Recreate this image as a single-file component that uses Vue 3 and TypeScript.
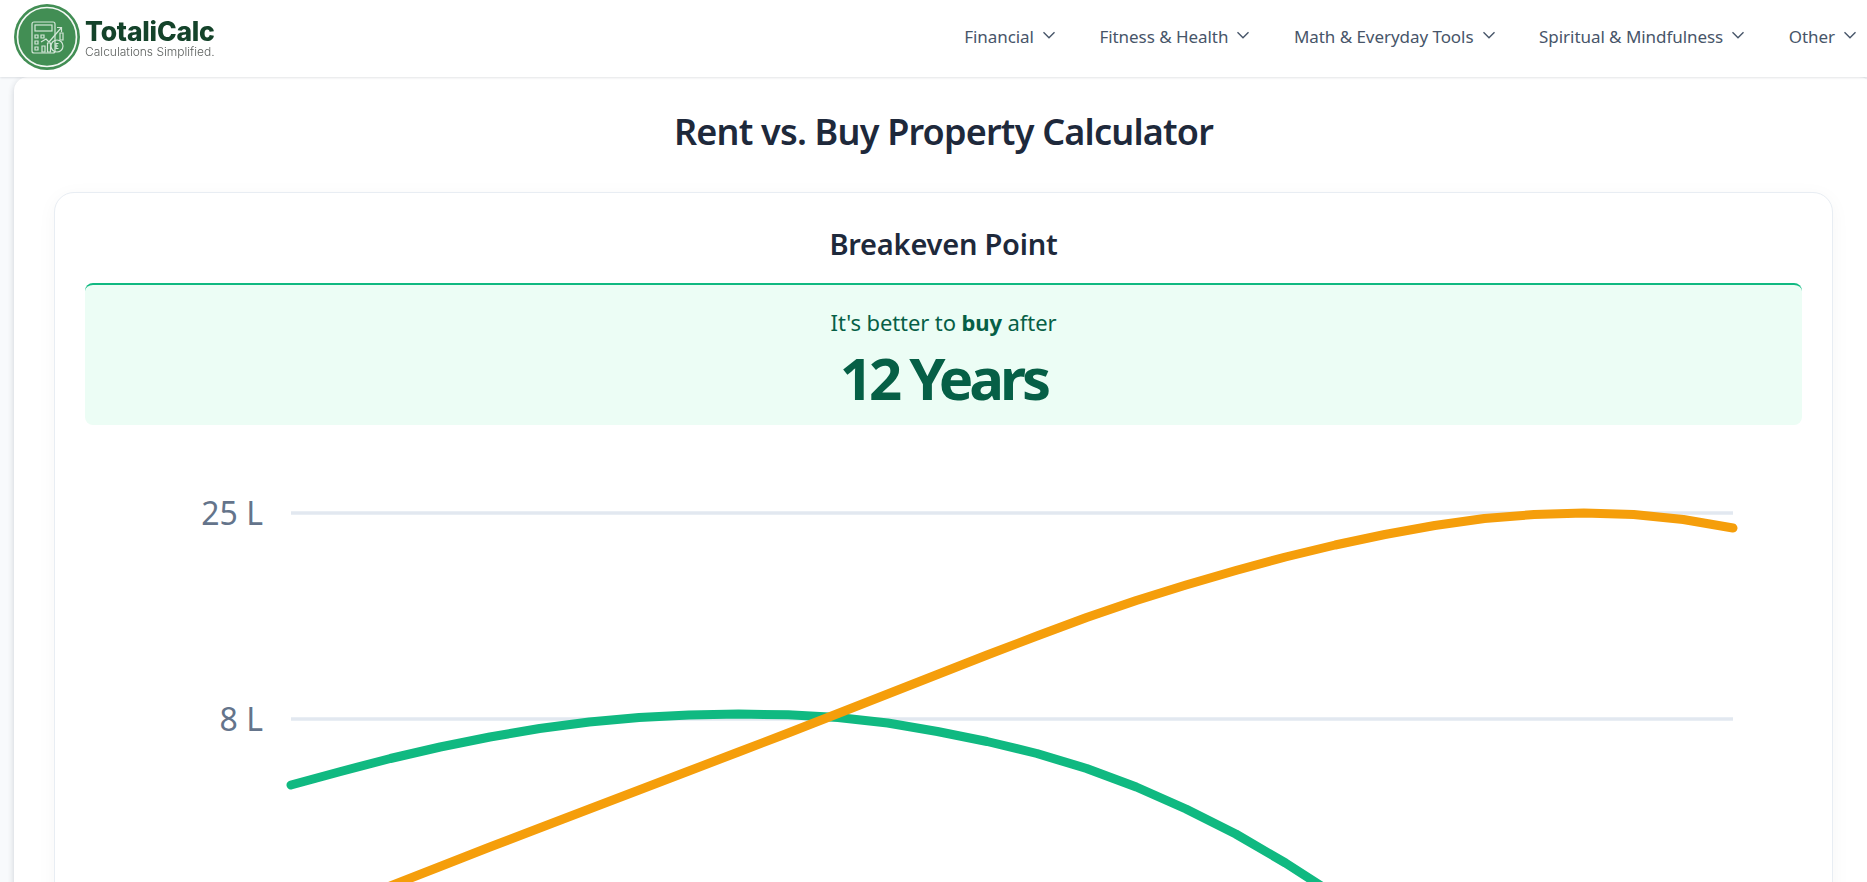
<script setup lang="ts">
const navItems: string[] = ['Financial', 'Fitness & Health', 'Math & Everyday Tools', 'Spiritual & Mindfulness', 'Other']

const xAt = (i: number): number => 291 + i * (1442 / 29)
const toPoints = (ys: number[]): string => ys.map((y, i) => `${xAt(i).toFixed(1)},${y}`).join(' ')

const green = toPoints([785, 771.5, 758.5, 747, 737, 728.5, 722, 717.5, 715, 714, 714.8, 717.5, 723, 731.5, 741.5, 753.5, 768.5, 787, 809, 834, 863, 895, 930, 968, 1010])
const orange = toPoints([925, 905.5, 886, 866.5, 847, 828, 809, 790, 771, 752, 733, 713.5, 694, 674.5, 655, 636, 617.5, 600.5, 585, 570.5, 557, 545, 534.5, 525.5, 518.5, 514.5, 513, 514.5, 519.5, 528])
const ticks = [
  { y: 513, label: '25 L' },
  { y: 719, label: '8 L' },
]
</script>

<template>
  <div class="page">
    <header class="topbar">
      <div class="brand">
        <svg class="logo" viewBox="0 0 66 66" aria-hidden="true">
          <circle cx="33" cy="33" r="33" fill="#428e54" />
          <circle cx="33" cy="33" r="29.5" fill="none" stroke="#f2f8f3" stroke-width="1.7" />
          <g fill="none" stroke="#d3e6d8" stroke-width="1.2">
            <rect x="18" y="18" width="23" height="31" rx="2" />
            <rect x="21" y="21" width="17" height="6" />
            <path d="M21 31h3v3h-3zM27 31h3v3h-3zM21 37h3v3h-3zM21 43h3v3h-3z" />
            <path d="M27 38l5-3 3 3 12-14M43 23.500h4.500v4.500" />
            <path d="M28 48v-6h3v6zM33.500 48v-9h3v9zM46 36v-7h3v7z" />
            <circle cx="43" cy="42" r="6" />
            <path d="M44.500 39.500h-2.500v5h2.500M41 42h3" />
          </g>
        </svg>
        <div class="brand-text">
          <span class="brand-name">TotaliCalc</span>
          <span class="brand-tag">Calculations Simplified.</span>
        </div>
      </div>
      <nav class="nav">
        <a v-for="item in navItems" :key="item" class="nav-item">
          <span>{{ item }}</span>
          <svg class="chev" viewBox="0 0 24 24" aria-hidden="true"><path d="m6 9 6 6 6-6" /></svg>
        </a>
      </nav>
    </header>

    <main class="sheet">
      <h1 class="title">Rent vs. Buy Property Calculator</h1>
      <section class="card">
        <h2 class="card-title">Breakeven Point</h2>
        <div class="result">
          <p class="result-lead">It's better to <strong>buy</strong> after</p>
          <p class="result-value">12 Years</p>
        </div>
        <svg class="chart" viewBox="85 449 1717 600" role="img" aria-label="Rent versus buy cost chart">
          <g v-for="t in ticks" :key="t.label">
            <line x1="291" x2="1733" :y1="t.y" :y2="t.y" class="grid" />
            <text x="263" :y="t.y + 12" text-anchor="end" class="tick">{{ t.label }}</text>
          </g>
          <polyline :points="green" class="series series-green" />
          <polyline :points="orange" class="series series-orange" />
        </svg>
      </section>
    </main>
  </div>
</template>

<style>
html, body { margin: 0; height: 882px; overflow: hidden; background: #f8fafc; }
</style>

<style scoped>
.page {
  height: 882px;
  overflow: hidden;
  font-family: "Noto Sans", "Open Sans", sans-serif;
  color: #1e293b;
}
.topbar {
  position: relative;
  z-index: 2;
  height: 77px;
  box-sizing: border-box;
  display: flex;
  align-items: center;
  justify-content: space-between;
  padding: 0 6px 4px 14px;
  background: #fff;
  box-shadow: 0 1px 2px rgba(30, 41, 59, 0.12);
}
.brand { display: flex; align-items: center; gap: 5px; filter: blur(0.35px); }
.logo { width: 66px; height: 66px; display: block; }
.brand-text { display: flex; flex-direction: column; padding-top: 2px; }
.brand-name {
  font-family: Inter, sans-serif;
  font-weight: 800;
  font-size: 26.500px;
  line-height: 28px;
  letter-spacing: -0.2px;
  color: #14432a;
}
.brand-tag {
  font-family: Inter, sans-serif;
  font-size: 12px;
  line-height: 13px;
  font-weight: 300;
  color: #5b5f5d;
}
.nav { display: flex; gap: 39.500px; }
.nav-item {
  display: flex;
  align-items: center;
  gap: 4px;
  font-size: 17px;
  color: #475569;
  letter-spacing: -0.05px;
}
.chev { width: 22px; height: 22px; margin-top: -3px; fill: none; stroke: #475569; stroke-width: 1.500; }
.sheet {
  margin: 0 0 0 14px;
  width: 1859px;
  box-sizing: border-box;
  height: 900px;
  padding: 0 40px;
  background: #fff;
  border-radius: 14px 14px 0 0;
  box-shadow: 0 2px 6px rgba(30, 41, 59, 0.2);
}
.title {
  margin: 0;
  padding: 33px 0 38px;
  text-align: center;
  font-size: 36px;
  line-height: 44px;
  font-weight: 600;
  letter-spacing: -0.8px;
}
.card {
  padding: 26px 30px 30px;
  background: #fff;
  border: 1px solid #e8edf3;
  border-radius: 20px;
  box-shadow: 0 4px 20px rgba(30, 41, 59, 0.04);
}
.card-title {
  margin: 0 0 14px;
  text-align: center;
  font-size: 29px;
  line-height: 50px;
  font-weight: 600;
  letter-spacing: -0.23px;
}
.result {
  height: 142px;
  box-sizing: border-box;
  padding-top: 21px;
  text-align: center;
  background: #ecfdf5;
  border-top: 2px solid #10b981;
  border-radius: 8px;
  color: #065f46;
}
.result-lead { margin: 0; font-size: 22px; line-height: 32px; letter-spacing: -0.1px; }
.result-lead strong { font-weight: 700; }
.result-value {
  margin: 0;
  font-size: 58px;
  line-height: 80px;
  font-weight: 700;
  letter-spacing: -4px;
}
.chart { display: block; width: 1717px; height: 600px; margin-top: 24px; }
.grid { stroke: #e2e8f0; stroke-width: 3.500; }
.tick { font-size: 32px; fill: #64748b; font-weight: 400; }
.series { fill: none; stroke-width: 9; stroke-linecap: round; stroke-linejoin: round; }
.series-green { stroke: #10b981; }
.series-orange { stroke: #f59e0b; }
</style>
